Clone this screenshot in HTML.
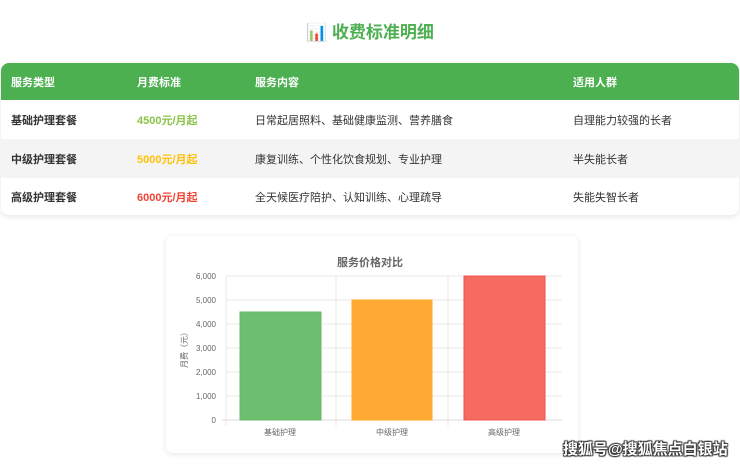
<!DOCTYPE html>
<html><head><meta charset="utf-8"><style>
*{margin:0;padding:0;box-sizing:border-box}
body{width:740px;height:464px;background:#fff;font-family:"Liberation Sans","Noto Sans CJK SC",sans-serif;position:relative;overflow:hidden}
h2{position:absolute;top:18px;left:0;width:740px;text-align:center;font-size:17px;color:#4caf50;font-weight:bold}
.tbl{position:absolute;left:1px;top:63px;width:738px;border-radius:8px;overflow:hidden;box-shadow:0 2px 6px rgba(0,0,0,.1)}
.row{height:39px;display:flex;align-items:center;font-size:11px;color:#333}
.row div{position:absolute}
.hd{background:#4caf50;color:#fff;font-weight:bold;height:37px}
.c1{left:10px}.c2{left:136px}.c3{left:254px}.c4{left:572px}
.r{position:relative}
.b{font-weight:bold}
.g{background:#f4f4f4}
.card{position:absolute;left:166px;top:236px;width:412px;height:217px;border-radius:7px;box-shadow:0 1px 6px rgba(0,0,0,.1);background:#fff}
.wm{position:absolute;left:563px;top:438px;font-size:15px;font-weight:bold;color:#fff;text-shadow:0 0 1px #333,1px 1px 1px #333,-1px -1px 1px #333,1px -1px 1px #333,-1px 1px 1px #333}
</style></head><body>
<h2>📊 收费标准明细</h2>
<div class="tbl">
<div class="row hd r"><div class="c1">服务类型</div><div class="c2">月费标准</div><div class="c3">服务内容</div><div class="c4">适用人群</div></div>
<div class="row r"><div class="c1 b">基础护理套餐</div><div class="c2 b" style="color:#8bc34a">4500元/月起</div><div class="c3">日常起居照料、基础健康监测、营养膳食</div><div class="c4">自理能力较强的长者</div></div>
<div class="row r g"><div class="c1 b">中级护理套餐</div><div class="c2 b" style="color:#ffc107">5000元/月起</div><div class="c3">康复训练、个性化饮食规划、专业护理</div><div class="c4">半失能长者</div></div>
<div class="row r" style="height:37px"><div class="c1 b">高级护理套餐</div><div class="c2 b" style="color:#f44336">6000元/月起</div><div class="c3">全天候医疗陪护、认知训练、心理疏导</div><div class="c4">失能失智长者</div></div>
</div>
<div class="card"></div>
<svg style="position:absolute;left:0;top:0" width="740" height="464" font-family="Liberation Sans,Noto Sans CJK SC,sans-serif">
<text x="370" y="266" text-anchor="middle" font-size="11" font-weight="bold" fill="#666">服务价格对比</text>
<g stroke="#e8e8e8" stroke-width="1">
<line x1="226" y1="276" x2="562" y2="276"/><line x1="226" y1="300" x2="562" y2="300"/><line x1="226" y1="324" x2="562" y2="324"/><line x1="226" y1="348" x2="562" y2="348"/><line x1="226" y1="372" x2="562" y2="372"/><line x1="226" y1="396" x2="562" y2="396"/>
<line x1="336" y1="276" x2="336" y2="426"/><line x1="448" y1="276" x2="448" y2="426"/><line x1="226" y1="276" x2="226" y2="426"/>
</g>
<line x1="222" y1="420" x2="562" y2="420" stroke="#ddd"/>
<rect x="240" y="312" width="81" height="108" fill="#6dbe6f" stroke="#66bb6a"/>
<rect x="352" y="300" width="80" height="120" fill="#ffab33" stroke="#ffa726"/>
<rect x="464" y="276" width="81" height="144" fill="#f56b60" stroke="#ef5350"/>
<g font-size="8" fill="#666" text-anchor="end">
<text x="216" y="279">6,000</text><text x="216" y="303">5,000</text><text x="216" y="327">4,000</text><text x="216" y="351">3,000</text><text x="216" y="375">2,000</text><text x="216" y="399">1,000</text><text x="216" y="423">0</text>
</g>
<g font-size="8" fill="#666" text-anchor="middle">
<text x="280" y="435">基础护理</text><text x="392" y="435">中级护理</text><text x="504" y="435">高级护理</text>
</g>
<text transform="translate(187,348) rotate(-90)" font-size="8" fill="#666" text-anchor="middle">月费（元）</text>
</svg>
<div class="wm">搜狐号@搜狐焦点白银站</div>
</body></html>
